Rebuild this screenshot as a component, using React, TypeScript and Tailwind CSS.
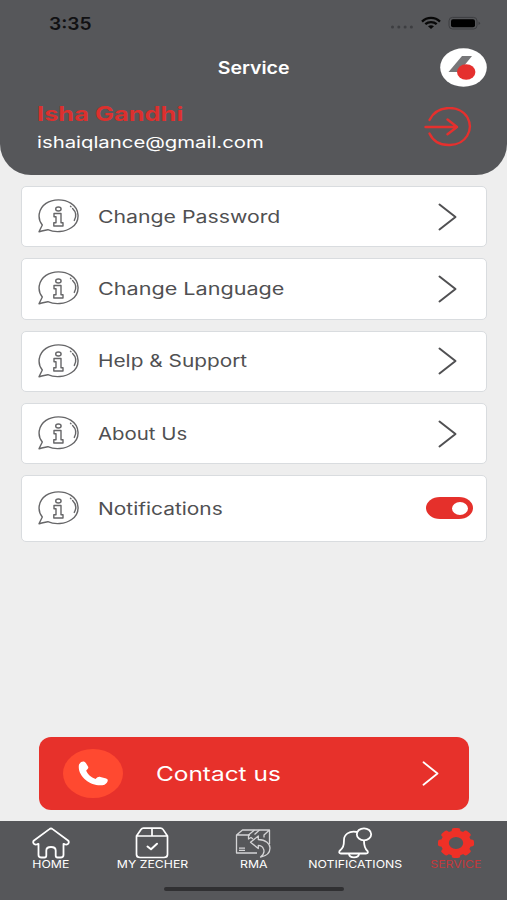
import React from 'react';

const POPPINS = "font-[Inter,'Liberation_Sans',sans-serif]";

const menu = [
  { label: 'Change Password', scale: 'scale-x-[1.25]' },
  { label: 'Change Language', scale: 'scale-x-[1.27]' },
  { label: 'Help & Support', scale: 'scale-x-[1.225]' },
  { label: 'About Us', scale: 'scale-x-[1.2]' },
];

function InfoIcon() {
  return (
    <svg className="mb-px ml-4 h-[34px] w-[41px] shrink-0" viewBox="0 0 41 34" fill="none" stroke="#666668" strokeWidth="1.4" strokeLinejoin="round" strokeLinecap="round">
      <path d="M1 32.7 L4.3 26 C-1 19.5 .3 9.6 8 4.4 C15 -.3 25.7 -.3 32.7 4.2 C42.2 10.2 42.5 22.6 33.6 28.5 C27 33.3 16.8 33.7 9.8 30.7 C7 31.1 4 32 1 32.7 Z" />
      <ellipse cx="20.4" cy="10" rx="2.7" ry="2" />
      <path d="M16 14.5 H23 V23.7 H25 V27 H15.8 V23.7 H18 V17.8 H16 Z" />
      <path d="M32.5 7.3 L33 7.7 M34.6 9.4 C38 12.8 38.5 17.5 36.3 21.4" />
    </svg>
  );
}

function Chevron() {
  return (
    <svg className="mr-[29px] h-7 w-[19px]" viewBox="0 0 19 28" fill="none" stroke="#505052" strokeWidth="2" strokeLinecap="round" strokeLinejoin="round">
      <path d="M1.5 1.5 L17.5 14 L1.5 26.5" />
    </svg>
  );
}

function HomeIcon() {
  return (
    <svg className="h-8 w-[38px]" viewBox="0 0 38 32" fill="none" stroke="#fff" strokeWidth="1.8" strokeLinejoin="round">
      <path d="M17.4 2.1 Q19 .8 20.6 2.1 L36 13.5 Q37.8 15.2 35.8 17 Q34.5 18 32.7 17.2 L31.5 17 V28 Q31.5 30.5 28.5 30.5 H25.5 Q23.7 30.5 23.7 28.5 V23.5 Q23.7 20 19 20 Q14.3 20 14.3 23.5 V28.5 Q14.3 30.5 12.5 30.5 H9.5 Q6.5 30.5 6.5 28 V17 L5.3 17.2 Q3.5 18 2.2 17 Q.2 15.2 2 13.5 Z" />
    </svg>
  );
}

function ZecherIcon() {
  return (
    <svg className="h-8 w-[34px]" viewBox="0 0 34 32" fill="none" stroke="#fff" strokeWidth="1.7" strokeLinejoin="round" strokeLinecap="round">
      <path d="M1.5 9 L6 2.4 Q6.8 1.2 8.5 1.2 H25.5 Q27.2 1.2 28 2.4 L32.5 9 V27.5 Q32.5 30.5 29 30.5 H5 Q1.5 30.5 1.5 27.5 Z M1.5 9 H32.5 M17 1.2 V9" />
      <path d="M12.5 19.5 L16 22.2 L22 16.7" strokeWidth="2" />
    </svg>
  );
}

function RmaIcon() {
  return (
    <svg className="h-8 w-9" viewBox="0 0 36 32" fill="none" stroke="#d4d4d6" strokeWidth="1.3" strokeLinejoin="round">
      <path d="M22 26 H1.5 V8 L7.5 3 H34.5 V17 M1.5 8 H15 M34.5 3 L29 8 V10.5" />
      <path d="M4 21.2 H10 M4 23.4 H10" />
      <path d="M19.5 3 L13.5 8 V12 L16 10.5 L18 12 M24.5 3 L19.5 7.5" />
      <path d="M15.5 15.3 L23.3 9 V12.5 C31 12.5 35 17 35 21 C35 25.5 31.5 29 25.5 30 C28.8 27.5 29.8 24.5 28.3 21.5 C27.4 19.3 26 18.3 23.3 18.3 V21.5 Z" />
    </svg>
  );
}

function BellIcon() {
  return (
    <svg className="h-8 w-[36px]" viewBox="0 0 36 32" fill="none" stroke="#fff" strokeWidth="1.8" strokeLinejoin="round">
      <path d="M20 5 C12 3.5 7 7.5 7 13 C7 19 6 21 2.5 24 Q1.5 26.5 4 26.5 H29 Q31.8 26.5 30.5 24 C27.8 21.5 27 19 27 14" />
      <path d="M12 26.8 C12.5 31.5 21.5 31.5 22 26.8" />
      <ellipse cx="27" cy="7.3" rx="7.2" ry="6" />
    </svg>
  );
}

function GearIcon() {
  return (
    <svg className="h-8 w-[38px]" viewBox="0 0 38 32">
      <g transform="translate(19 16) scale(1.2 1)" fill="#ef3027">
        {[0, 45, 90, 135, 180, 225, 270, 315].map(a => (
          <rect key={a} x="-3.6" y="-15" width="7.2" height="8" rx="2" transform={`rotate(${a})`} />
        ))}
        <circle r="9.3" fill="none" stroke="#ef3027" strokeWidth="6.6" />
      </g>
    </svg>
  );
}

const tabs = [
  { label: 'HOME', Icon: HomeIcon, text: 'text-white' },
  { label: 'MY ZECHER', Icon: ZecherIcon, text: 'text-white' },
  { label: 'RMA', Icon: RmaIcon, text: 'text-white' },
  { label: 'NOTIFICATIONS', Icon: BellIcon, text: 'text-white' },
  { label: 'SERVICE', Icon: GearIcon, text: 'text-[#c5373a]' },
];

export default function App() {
  return (
    <div className={`flex h-[900px] w-[507px] flex-col overflow-hidden bg-[#eeeeee] ${POPPINS}`}>
      <header className="h-[175px] shrink-0 rounded-b-[31px] bg-[#56575a]">
        {/* Status bar */}
        <div className="flex h-[46px] items-center justify-between pl-[49px] pr-[26px]">
          <span className="origin-left scale-x-[1.13] pt-[3px] text-[17px] font-semibold text-[#111113]">3:35</span>
          <svg className="h-4 w-[92px]" viewBox="0 0 92 16">
            <g fill="#3d3e41">
              <circle cx="3.5" cy="12" r="1.5" />
              <circle cx="9.8" cy="12" r="1.5" />
              <circle cx="16.1" cy="12" r="1.5" />
              <circle cx="22.4" cy="12" r="1.5" />
            </g>
            <g fill="none" stroke="#080808" strokeWidth="2.3">
              <path d="M33 6.6 C38 1.7 46 1.7 51 6.6" />
              <path d="M36.3 9.2 C39.5 6.3 44.5 6.3 47.7 9.2" />
            </g>
            <path d="M39 11.3 Q42 9.2 45 11.3 L42 14 Z" fill="#080808" />
            <rect x="60" y="2.4" width="28" height="11.6" rx="3.5" fill="none" stroke="#3d3e41" />
            <rect x="62" y="4.2" width="24" height="8" rx="2" fill="#000" />
            <path d="M89.5 6.5 Q92.5 8.2 89.5 10 Z" fill="#3d3e41" />
          </svg>
        </div>
        <div className="grid h-[42px] grid-cols-[1fr_auto_1fr] items-center pr-5">
          <span />
          <h1 className="origin-center scale-x-[1.15] pl-[18px] pt-[3px] text-[17px] font-semibold text-white">Service</h1>
          <svg className="h-[39px] w-[47px] justify-self-end" viewBox="0 0 47 39">
            <ellipse cx="23.5" cy="19.5" rx="23.3" ry="19.3" fill="#fff" />
            <path d="M22 8 H32 L19 24 H8.5 Z" fill="#777779" />
            <ellipse cx="26.2" cy="24" rx="9.2" ry="7.8" fill="#e5302e" />
          </svg>
        </div>
        <div className="flex justify-between pl-[37px] pr-[35px] pt-3">
          <div>
            <p className="w-max origin-left scale-x-[1.27] text-[20px] font-bold leading-7 text-[#dc302e]">Isha Gandhi</p>
            <p className="w-max origin-left scale-x-[1.27] text-[16px] leading-7 text-white">ishaiqlance@gmail.com</p>
          </div>
          <svg className="mt-[7px] h-[40px] w-[48px]" viewBox="0 0 48 40" fill="none" stroke="#e5302e" strokeWidth="2.4" strokeLinecap="round" strokeLinejoin="round">
            <path d="M5.5 13 C13 -2.5 36 -2.5 43.5 10.5 C50 23 42 37.5 26 38 C16.5 38.4 9 34 5.5 26.5 M1.5 20 H33 M23.5 12.5 L33 20 L23.5 27.3" />
          </svg>
        </div>
      </header>

      <main className="flex flex-1 flex-col pl-[21px] pr-5 pt-[11px]">
        <div className="flex flex-col gap-[11px]">
          {menu.map(({ label, scale }) => (
            <div key={label} className="flex h-[61.3px] items-center rounded-[5px] border border-[#d9dcdf] bg-white">
              <InfoIcon />
              <span className={`ml-[19px] w-max origin-left pt-[2px] text-[17px] text-[#505052] ${scale}`}>{label}</span>
              <span className="flex-1" />
              <Chevron />
            </div>
          ))}
          <div className="flex h-[67px] items-center rounded-[5px] border border-[#d9dcdf] bg-white">
            <InfoIcon />
            <span className="ml-[19px] w-max origin-left scale-x-[1.23] pt-[2px] text-[17px] text-[#505052]">Notifications</span>
            <span className="flex-1" />
            <div className="mb-px mr-[13px] flex h-[22px] w-[47px] items-center justify-end rounded-[14px/11px] bg-[#e5302b] pr-[5px]">
              <span className="h-[13px] w-4 rounded-[50%] bg-white" />
            </div>
          </div>
        </div>

        <button className="mx-[18px] mb-[11px] mt-auto flex h-[73px] items-center rounded-xl bg-[#e7312b] pl-6 pr-[30px]">
          <span className="flex h-[49px] w-[60px] items-center justify-center rounded-[50%] bg-[#ff4930]">
            <svg className="h-[25px] w-[30px]" viewBox="0 0 30 25" fill="#fff">
              <path d="M1 3.4 C3 .2 6.2 -.4 8 2.2 L10 5.4 C11 7 9.5 8.3 8.2 9.5 C9.2 13 13 16.4 17.6 17.9 C19.2 16.5 20.7 15.4 22.4 16 L28.2 17.5 C31.2 18.7 29.5 21.8 26.5 23.7 C15.5 27.2 -1.5 16 1 3.4 Z" />
            </svg>
          </span>
          <span className="ml-[33px] origin-left scale-x-[1.22] text-[20px] text-white">Contact us</span>
          <svg className="ml-auto h-[25px] w-[17px]" viewBox="0 0 17 25" fill="none" stroke="#fff" strokeWidth="1.8" strokeLinecap="round" strokeLinejoin="round">
            <path d="M1.5 1.3 L15.5 12.5 L1.5 23.7" />
          </svg>
        </button>
      </main>

      <nav className="flex h-[79px] shrink-0 flex-col items-center bg-[#56575a]">
        <div className="grid w-full grid-cols-5 pt-[6px]">
          {tabs.map(({ label, Icon, text }) => (
            <div key={label} className="flex flex-col items-center">
              <Icon />
              <span className={`scale-x-[1.17] whitespace-nowrap text-[10.5px] leading-[12px] ${text}`}>{label}</span>
            </div>
          ))}
        </div>
        <div className="mt-[16px] h-1 w-[180px] rounded-full bg-[#303032]" />
      </nav>
    </div>
  );
}
